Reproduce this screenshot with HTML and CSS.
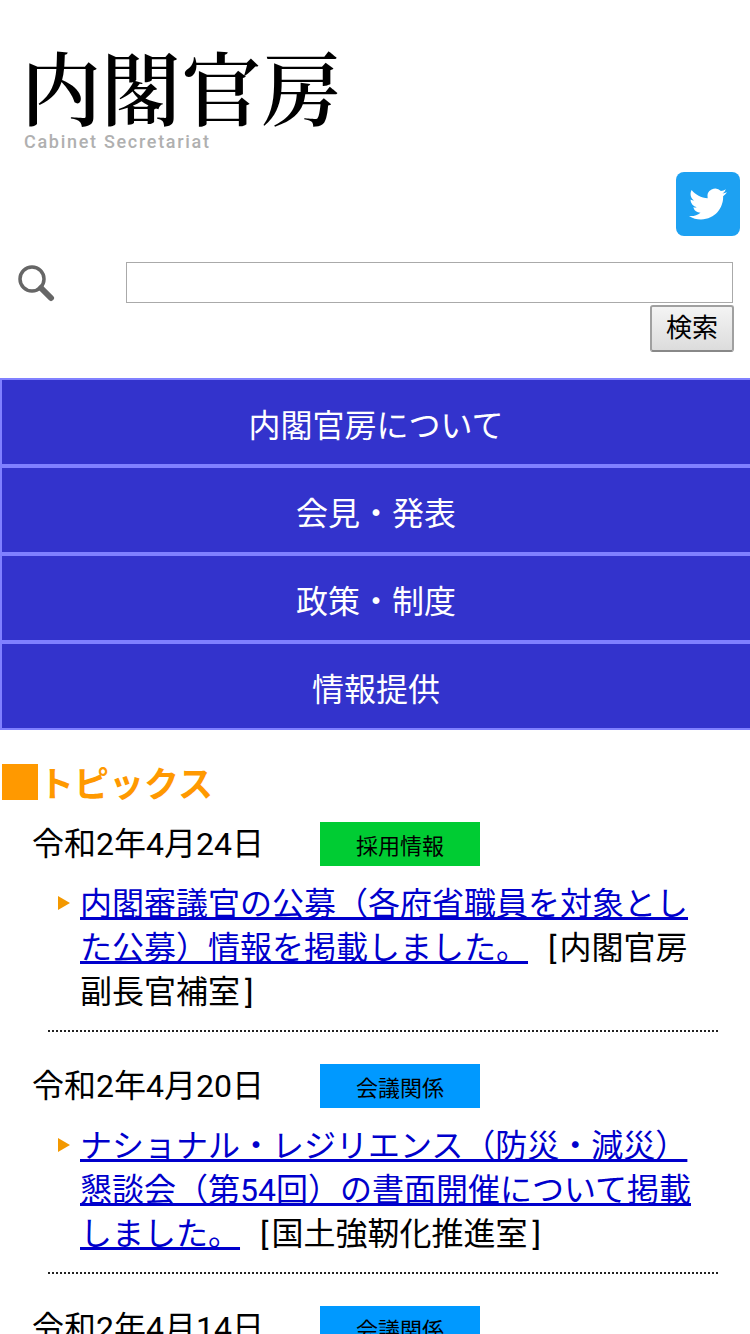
FILE: index.html
```html
<!DOCTYPE html>
<html lang="ja">
<head>
<meta charset="utf-8">
<title>内閣官房</title>
<link rel="stylesheet" href="styles.css">
</head>
<body>
<header class="logo">
  <div class="logo-ja">内閣官房</div>
  <div class="logo-en">Cabinet Secretariat</div>
</header>
<div class="social">
  <a class="tw" href="#">
    <svg viewBox="0 0 24 24" width="38" height="38"><path fill="#fff" d="M23.95 4.57a10 10 0 0 1-2.82.77 4.96 4.96 0 0 0 2.16-2.72c-.95.55-2 .96-3.13 1.2a4.92 4.92 0 0 0-8.38 4.48C7.69 8.1 4.07 6.13 1.64 3.16a4.82 4.82 0 0 0-.67 2.48c0 1.71.87 3.21 2.19 4.1a4.9 4.9 0 0 1-2.23-.62v.06a4.92 4.92 0 0 0 3.95 4.83 5 5 0 0 1-2.21.08 4.94 4.94 0 0 0 4.6 3.42A9.87 9.87 0 0 1 0 19.54a14 14 0 0 0 7.56 2.21c9.05 0 14-7.5 14-13.98 0-.21 0-.42-.02-.63a9.94 9.94 0 0 0 2.46-2.55z"/></svg>
  </a>
</div>
<form class="search">
  <svg class="search-icon" viewBox="0 0 38 38" width="38" height="38"><circle cx="15" cy="15" r="12" fill="none" stroke="#666" stroke-width="3.5"/><path d="M24 24l10 10" stroke="#666" stroke-width="6" stroke-linecap="round"/></svg>
  <input class="search-input" type="text">
  <button class="search-btn" type="button">検索</button>
</form>
<nav class="menu">
  <a class="menu-item" href="#">内閣官房について</a>
  <a class="menu-item" href="#">会見・発表</a>
  <a class="menu-item" href="#">政策・制度</a>
  <a class="menu-item" href="#">情報提供</a>
</nav>
<main class="topics">
  <h2 class="topics-title"><span class="topics-box"></span>トピックス</h2>
  <article class="entry">
    <div class="entry-head"><span class="date">令和2年4月24日</span><span class="badge badge-green">採用情報</span></div>
    <p class="entry-body"><a href="#">内閣審議官の公募（各府省職員を対象とした公募）情報を掲載しました。</a><span class="org"><span class="br-open">[</span>内閣官房副長官補室<span class="br-close">]</span></span></p>
  </article>
  <article class="entry">
    <div class="entry-head"><span class="date">令和2年4月20日</span><span class="badge badge-blue">会議関係</span></div>
    <p class="entry-body"><a href="#">ナショナル・レジリエンス（防災・減災）懇談会（第54回）の書面開催について掲載しました。</a><span class="org"><span class="br-open">[</span>国土強靭化推進室<span class="br-close">]</span></span></p>
  </article>
  <article class="entry">
    <div class="entry-head"><span class="date">令和2年4月14日</span><span class="badge badge-blue">会議関係</span></div>
  </article>
</main>
</body>
</html>
```
FILE: styles.css
```css
html, body { margin: 0; padding: 0; height: 1334px; overflow: hidden; }
body {
  background: #fff;
  color: #000;
  font-family: Roboto, "Noto Sans CJK JP", sans-serif;
  font-size: 32px;
}
.logo { height: 172px; padding-left: 21px; box-sizing: border-box; padding-top: 40px; }
.logo-ja {
  font-family: "Noto Serif CJK JP", "Noto Sans CJK JP", serif;
  font-weight: 600;
  font-size: 80px;
  line-height: 90px;
}
.logo-en {
  color: #b0b0b0;
  font-family: Roboto, sans-serif;
  font-weight: 500;
  font-size: 18px;
  letter-spacing: 1.7px;
  line-height: 20px;
  margin-top: 2px;
  padding-left: 3px;
}
.social { display: flex; justify-content: flex-end; padding-right: 10px; }
.tw {
  display: flex;
  align-items: center;
  justify-content: center;
  width: 64px;
  height: 64px;
  border-radius: 8px;
  background: #1da1f2;
}
.search {
  display: grid;
  grid-template-columns: 126px 607px;
  margin-top: 26px;
  height: 116px;
  align-content: start;
}
.search-icon { margin: 2px 0 0 17px; }
.search-input {
  box-sizing: border-box;
  width: 607px;
  height: 41px;
  border: 1px solid #aaa;
  background: #fff;
  padding: 0;
  margin: 0;
}
.search-btn {
  grid-column: 2;
  justify-self: end;
  box-sizing: border-box;
  width: 84px;
  height: 47px;
  margin: 2px -1px 0 0;
  padding: 0 0 7px;
  border: 2px solid #a0a0a0;
  border-bottom-color: #888;
  border-radius: 3px;
  background: linear-gradient(#f4f4f4, #dcdcdc);
  font-family: Roboto, "Noto Sans CJK JP", sans-serif;
  font-size: 26px;
  color: #000;
}
.menu { display: block; }
.menu-item {
  display: block;
  box-sizing: border-box;
  height: 88px;
  border: 2px solid #8080ff;
  border-right: 0;
  background: #3333cc;
  color: #fff;
  text-align: center;
  line-height: 92px;
  text-decoration: none;
}
.topics-title {
  display: flex;
  align-items: center;
  margin: 34px 0 0 2px;
  height: 36px;
  font-family: "Noto Sans CJK JP", sans-serif;
  font-size: 35px;
  font-weight: 700;
  color: #f90;
  line-height: 36px;
}
.topics-box {
  display: block;
  width: 36px;
  height: 36px;
  margin-right: 1px;
  background: #f90;
}
.entry-head { display: flex; margin-top: 22px; padding-left: 32px; height: 44px; }
.date { width: 288px; line-height: 44px; }
.badge {
  width: 160px;
  height: 44px;
  text-align: center;
  font-size: 22px;
  line-height: 50px;
}
.badge-green { background: #0c3; }
.badge-blue { background: #09f; }
.entry + .entry .entry-head { margin-top: 32px; }
.entry-body {
  position: relative;
  margin: 16px 32px 0 48px;
  padding: 0 0 16px 32px;
  line-height: 44px;
  border-bottom: 2px dotted #222;
}
.entry-body::before {
  content: "";
  position: absolute;
  left: 10px;
  top: 14px;
  border-left: 12px solid #f39800;
  border-top: 7px solid transparent;
  border-bottom: 7px solid transparent;
}
.entry-body a { color: #00c; }
.org { margin-left: 20px; }
.br-open { margin-right: 3px; }
.br-close { margin-left: 5px; }
```
